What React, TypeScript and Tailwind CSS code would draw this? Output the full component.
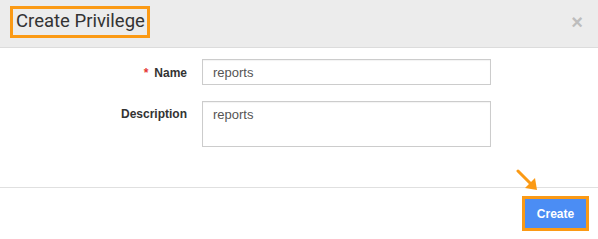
import React from 'react';

export default function App() {
    return (
        <div className="w-[598px] h-[239px] bg-white relative overflow-hidden" style={{ fontFamily: '"Liberation Sans", Arial, sans-serif' }}>
            <div className="h-[48px] bg-[#ececec] border-b border-[#dcdcdc] flex items-center justify-between pl-[10px] pr-[15px]">
                <div className="h-[32px] w-[140px] border-[3px] border-[#fb9a15] flex items-center pl-[3px] -mt-[4px] text-[18.5px] text-[#333] leading-none whitespace-nowrap font-['Roboto',sans-serif]">
                    Create Privilege
                </div>
                <span className="text-[20px] font-bold text-[#bdbdbd] leading-none -mt-[4px]">×</span>
            </div>

            <form className="pt-[11px] pb-[40px] flex flex-col gap-[16px]">
                <div className="flex items-start">
                    <label className="w-[187px] text-right text-[12px] font-bold text-[#333] pt-[5px]">
                        <span className="text-[#e53935] mr-[6px]">*</span>Name
                    </label>
                    <input
                        defaultValue="reports"
                        className="ml-[15px] w-[289px] h-[26px] border border-[#cccccc] px-[10px] text-[13px] text-[#555] outline-none shadow-[inset_0_1px_1px_rgba(0,0,0,0.05)]"
                    />
                </div>
                <div className="flex items-start">
                    <label className="w-[187px] text-right text-[12px] font-bold text-[#333] pt-[4px]">
                        Description
                    </label>
                    <textarea
                        defaultValue="reports"
                        className="ml-[15px] w-[289px] h-[46px] border border-[#cccccc] px-[10px] py-[3px] text-[13px] text-[#555] outline-none resize-none shadow-[inset_0_1px_1px_rgba(0,0,0,0.05)]"
                    />
                </div>
            </form>

            <div className="border-t border-[#e0e0e0] flex justify-end pt-[8px] pr-[9px]">
                <button className="w-[67px] h-[35px] border-[3px] border-[#fb9a15] bg-[#4b8df4] text-white text-[12px] font-bold leading-none">
                    Create
                </button>
            </div>

            <svg className="absolute left-[516px] top-[169px]" width="24" height="24" viewBox="0 0 24 24">
                <line x1="2" y1="2" x2="16" y2="16" stroke="#fb9a15" strokeWidth="3" strokeLinecap="round" />
                <polygon points="21,21 9,19 19,9" fill="#fb9a15" />
            </svg>
        </div>
    );
}
